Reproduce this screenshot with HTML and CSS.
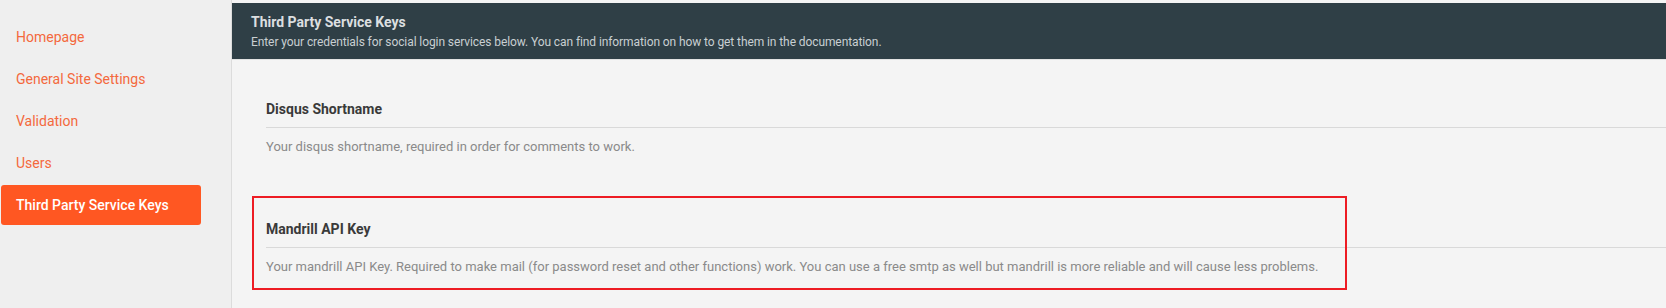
FILE: index.html
```html
<!DOCTYPE html>
<html lang="en">
<head>
  <meta charset="UTF-8">
  <title>Settings - Third Party Service Keys</title>
  <link rel="stylesheet" href="styles.css">
</head>
<body>
  <div class="layout">
    <nav class="sidebar">
      <a class="nav-item" href="#">Homepage</a>
      <a class="nav-item" href="#">General Site Settings</a>
      <a class="nav-item" href="#">Validation</a>
      <a class="nav-item" href="#">Users</a>
      <a class="nav-item active" href="#">Third Party Service Keys</a>
    </nav>

    <main class="content">
      <header class="panel-head">
        <h2>Third Party Service Keys</h2>
        <p>Enter your credentials for social login services below. You can find information on how to get them in the documentation.</p>
      </header>

      <section class="fields">
        <div class="field">
          <h4 class="field-label">Disqus Shortname</h4>
          <p class="field-help">Your disqus shortname, required in order for comments to work.</p>
        </div>

        <div class="field">
          <div class="annotation"></div>
          <h4 class="field-label">Mandrill API Key</h4>
          <p class="field-help">Your mandrill API Key. Required to make mail (for password reset and other functions) work. You can use a free smtp as well but mandrill is more reliable and will cause less problems.</p>
        </div>
      </section>
    </main>
  </div>
</body>
</html>
```

FILE: styles.css
```css
/* Base */
body {
  margin: 0;
  font-family: 'Roboto', 'Liberation Sans', sans-serif;
  background-color: #f4f4f4;
  color: #333;
}
.layout {
  display: flex;
  height: 308px;
  overflow: hidden;
}

/* Sidebar */
.sidebar {
  width: 231px;
  flex-shrink: 0;
  background: #efefef;
  padding: 17px 0 0 1px;
  box-sizing: border-box;
  display: flex;
  flex-direction: column;
  gap: 2px;
}
.nav-item {
  display: flex;
  align-items: center;
  width: 200px;
  height: 40px;
  padding-left: 15px;
  box-sizing: border-box;
  border-radius: 3px;
  font-size: 14px;
  color: #f4693d;
  text-decoration: none;
}
.nav-item.active {
  background: #ff5722;
  color: #fff;
  font-weight: 500;
}

/* Main */
.content {
  flex: 1;
  min-width: 0;
  border-left: 1px solid #dcdcdc;
  padding-top: 3px;
}
.panel-head {
  background: #2f3f46;
  height: 57px;
  padding: 11px 19px 0;
  box-sizing: border-box;
  border-bottom: 1px solid #e2e2e2;
}
.panel-head h2 {
  margin: 0;
  font-size: 14px;
  line-height: 17px;
  font-weight: bold;
  color: #dcdfe0;
}
.panel-head p {
  margin: 2px 0 0;
  font-size: 12px;
  line-height: 18px;
  letter-spacing: -0.09px;
  color: #c9cfd2;
  white-space: nowrap;
}

/* Fields */
.fields {
  padding: 39px 0 0 34px;
  display: flex;
  flex-direction: column;
  gap: 62px;
}
.field {
  position: relative;
}
.field-label {
  margin: 0;
  padding-bottom: 8px;
  border-bottom: 1px solid #d9d9d9;
  font-size: 14px;
  line-height: 20px;
  font-weight: bold;
  color: #3a3a3a;
}
.field-help {
  margin: 9px 0 0;
  font-size: 13px;
  line-height: 20px;
  color: #8a8a8a;
  white-space: nowrap;
}
/* red highlight drawn over the second field */
.annotation {
  position: absolute;
  top: -23px;
  left: -14px;
  width: 1095px;
  height: 94px;
  border: 2px solid #ed1c24;
  box-sizing: border-box;
  pointer-events: none;
}
```
